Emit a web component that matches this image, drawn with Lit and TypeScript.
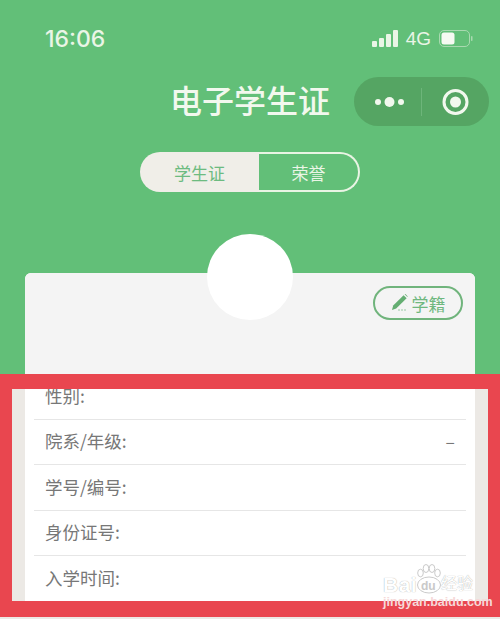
import { LitElement, html, css } from 'lit';
import { customElement } from 'lit/decorators.js';

const rows = [
  { label: '性别:', value: '' },
  { label: '院系/年级:', value: '–' },
  { label: '学号/编号:', value: '' },
  { label: '身份证号:', value: '' },
  { label: '入学时间:', value: '' },
];

@customElement('app-root')
export class AppRoot extends LitElement {
  static styles = css`
    :host {
      display: block;
      position: relative;
      width: 500px;
      height: 619px;
      overflow: hidden;
      font-family: "Liberation Sans", "Noto Sans CJK SC", sans-serif;
      background: linear-gradient(#62bf78 375px, #ece9e5 375px);
    }

    .status {
      height: 77px;
      display: flex;
      align-items: center;
      justify-content: space-between;
      padding: 0 27px 0 45px;
      box-sizing: border-box;
      color: #eaf5e6;
    }
    .time {
      font-family: Inter, "Liberation Sans", sans-serif;
      font-size: 23px;
      font-weight: 500;
    }
    .indicators {
      display: flex;
      align-items: center;
      gap: 8px;
      font-size: 19px;
    }
    .indicators svg { display: block; }

    .nav {
      height: 49px;
      display: grid;
      grid-template-columns: 1fr auto 1fr;
      align-items: center;
      padding: 0 11px;
    }
    .title {
      grid-column: 2;
      font-size: 32px;
      font-weight: 500;
      line-height: 44px;
      color: #f2f8ee;
      white-space: nowrap;
    }
    .capsule {
      grid-column: 3;
      justify-self: end;
      display: block;
    }

    .tabs {
      width: 220px;
      height: 40px;
      margin: 26px auto 0;
      display: flex;
      font-size: 17px;
    }
    .tab {
      display: flex;
      align-items: center;
      justify-content: center;
      box-sizing: border-box;
    }
    .tab.on {
      width: 119px;
      background: #f0eee8;
      color: #6dbb80;
      border-radius: 20px 0 0 20px;
    }
    .tab.off {
      flex: 1;
      color: #eaf5e6;
      border: 2px solid #e9f4e4;
      border-left: none;
      border-radius: 0 20px 20px 0;
    }

    .card {
      position: relative;
      margin: 81px 25px 0;
      background: #fff;
      border-radius: 6px 6px 0 0;
    }
    .avatar {
      position: absolute;
      top: -39px;
      left: 182px;
      width: 86px;
      height: 86px;
      border-radius: 50%;
      background: #fff;
    }
    .card-head {
      height: 101px;
      box-sizing: border-box;
      padding: 13px 12px 0 0;
      display: flex;
      justify-content: flex-end;
      align-items: flex-start;
      background: #f4f4f4;
      border-radius: 6px 6px 0 0;
    }
    .edit {
      width: 90px;
      height: 34px;
      box-sizing: border-box;
      border: 2px solid #70b47c;
      border-radius: 17px;
      display: flex;
      align-items: center;
      justify-content: center;
      gap: 2px;
      color: #6fb87f;
      font-size: 17px;
    }

    .rows { padding: 0 9px; }
    .row {
      height: 45.5px;
      box-sizing: border-box;
      padding: 0 11px 2px;
      display: flex;
      align-items: center;
      justify-content: space-between;
      border-bottom: 1px solid #e6e6e6;
      font-family: "Noto Sans CJK SC", sans-serif;
      font-size: 17.5px;
      color: #777;
    }

    .frame {
      position: absolute;
      left: 0;
      top: 374px;
      width: 500px;
      height: 243px;
      box-sizing: border-box;
      border: solid #e9464f;
      border-width: 15px 12px 16px;
    }

    .mark {
      position: absolute;
      left: 383px;
      top: 564px;
      width: 92px;
      height: 46px;
      color: #fff;
      text-shadow: 0 0 1px #9a9a9a;
    }
    .mark svg {
      position: absolute;
      left: 33px;
      top: 0;
    }
    .mark .bai {
      position: absolute;
      left: 0;
      top: 12px;
      font-size: 21px;
      font-weight: 700;
      line-height: 18px;
      letter-spacing: 0.5px;
    }
    .mark .du {
      position: absolute;
      left: 38px;
      top: 15px;
      font-size: 12px;
      font-weight: 700;
      line-height: 14px;
      color: #c9c9c9;
      text-shadow: none;
    }
    .mark .jy {
      position: absolute;
      left: 58px;
      top: 10px;
      font-size: 16px;
      line-height: 20px;
    }
    .mark .url {
      position: absolute;
      left: 0;
      top: 31px;
      font-size: 12.5px;
      font-weight: 700;
      line-height: 14px;
      white-space: nowrap;
      text-shadow: none;
      color: #f6d9d9;
    }
  `;

  render() {
    return html`
      <div class="status">
        <span class="time">16:06</span>
        <div class="indicators">
          <svg width="26" height="17" viewBox="0 0 26 17" fill="#eaf5e6">
            <rect x="0" y="11" width="5" height="6" rx="1"></rect>
            <rect x="7" y="8" width="5" height="9" rx="1"></rect>
            <rect x="14" y="4" width="5" height="13" rx="1"></rect>
            <rect x="21" y="0" width="5" height="17" rx="1"></rect>
          </svg>
          <span>4G</span>
          <svg width="34" height="17" viewBox="0 0 34 17" fill="none">
            <rect x="0.5" y="0.5" width="30" height="16" rx="4.5" stroke="#a9d9b0"></rect>
            <rect x="2.5" y="2.5" width="13" height="12" rx="2.5" fill="#f6faf2"></rect>
            <rect x="32" y="6" width="1.5" height="5" rx="0.7" fill="#a9d9b0"></rect>
          </svg>
        </div>
      </div>

      <div class="nav">
        <span class="title">电子学生证</span>
        <svg class="capsule" width="135" height="49" viewBox="0 0 135 49">
          <rect width="135" height="49" rx="24.5" fill="#55a563"></rect>
          <circle cx="24" cy="25" r="3" fill="#f2f8ee"></circle>
          <circle cx="35.5" cy="25" r="5" fill="#f2f8ee"></circle>
          <circle cx="47" cy="25" r="3" fill="#f2f8ee"></circle>
          <rect x="67" y="11" width="1" height="28" fill="#6db57a"></rect>
          <circle cx="101.5" cy="25" r="11.5" fill="none" stroke="#f2f8ee" stroke-width="3"></circle>
          <circle cx="101.5" cy="25" r="5.5" fill="#f2f8ee"></circle>
        </svg>
      </div>

      <div class="tabs">
        <div class="tab on">学生证</div>
        <div class="tab off">荣誉</div>
      </div>

      <div class="card">
        <div class="card-head">
          <div class="edit">
            <svg width="19" height="18" viewBox="0 0 19 18">
              <path d="M12.6 1.2 L15.6 4.2 L5.2 14.6 L1 16 L2.2 11.6 Z" fill="#64ae72"></path>
              <path d="M13.6 0.3 L14.4 0 L16.6 2.2 L16.4 3 Z" fill="#64ae72"></path>
              <circle cx="8" cy="16" r="0.8" fill="#8cc398"></circle>
              <circle cx="11" cy="16" r="0.8" fill="#8cc398"></circle>
              <circle cx="14" cy="16" r="0.8" fill="#8cc398"></circle>
            </svg>
            <span>学籍</span>
          </div>
        </div>
        <div class="avatar"></div>
        <div class="rows">
          ${rows.map(r => html`
            <div class="row">
              <span>${r.label}</span>
              <span>${r.value}</span>
            </div>
          `)}
        </div>
      </div>

      <div class="frame"></div>

      <div class="mark">
        <svg width="26" height="30" viewBox="0 0 26 30" fill="#fff" stroke="#bdbdbd" stroke-width="0.8">
          <ellipse cx="4.5" cy="9" rx="2.8" ry="3.8"></ellipse>
          <ellipse cx="10" cy="4.5" rx="2.8" ry="4"></ellipse>
          <ellipse cx="16" cy="4.5" rx="2.8" ry="4"></ellipse>
          <ellipse cx="21.5" cy="9" rx="2.8" ry="3.8"></ellipse>
          <ellipse cx="13" cy="21" rx="11.5" ry="8"></ellipse>
        </svg>
        <span class="bai">Bai</span>
        <span class="du">du</span>
        <span class="jy">经验</span>
        <span class="url">jingyan.baidu.com</span>
      </div>
    `;
  }
}
